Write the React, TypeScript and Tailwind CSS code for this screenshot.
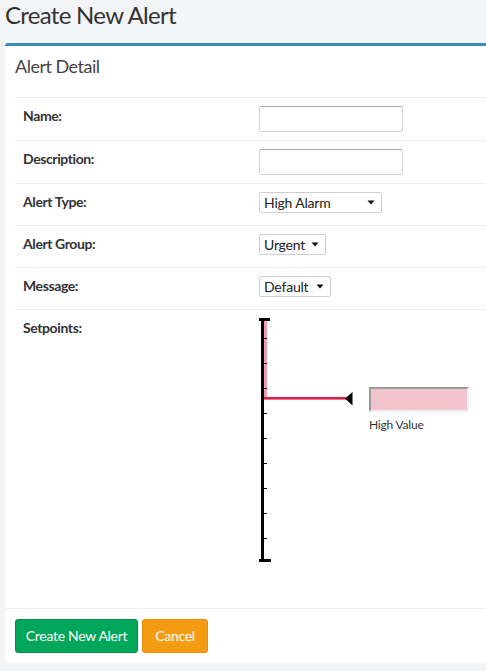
import React from "react";

function Caret() {
  return (
    <svg width="8" height="5" viewBox="0 0 8 5" className="shrink-0">
      <path d="M0.5 0.5 L7.5 0.5 L4 4.5 Z" fill="#111" />
    </svg>
  );
}

function FakeSelect({ value, width }: { value: string; width: string }) {
  return (
    <div
      className={`${width} h-[21px] border border-[#cfcfcf] rounded-[2px] bg-white flex items-center justify-between pl-[4px] pr-[6px] text-[14px] leading-[19px] tracking-[-0.2px] text-[#222]`}
    >
      <span>{value}</span>
      <Caret />
    </div>
  );
}

function TextBox() {
  return (
    <input
      type="text"
      className="block w-[144px] h-[26px] border border-[#d3d3d3] border-t-[#a9a9a9] rounded-[2px] bg-white outline-none"
    />
  );
}

function Row({
  label,
  children,
  h,
}: {
  label: string;
  children: React.ReactNode;
  h: string;
}) {
  return (
    <div className={`flex border-t border-[#f0f0f0] ${h}`}>
      <div className="w-[236px] shrink-0 px-[8px] pt-[8px] text-[14px] leading-[20px] tracking-[-0.4px] font-bold text-[#333]">
        {label}
      </div>
      <div className="px-[8px] pt-[8px]">{children}</div>
    </div>
  );
}

function Setpoints() {
  const ticks = [0, 1, 2, 3, 4, 5, 6, 7, 8].map((k) => 20 + 25 * k);
  return (
    <div className="relative w-[220px] h-[250px]">
      <svg
        width="100"
        height="250"
        viewBox="0 0 100 250"
        className="absolute left-0 top-0"
      >
        <rect x="5" y="2" width="3" height="77" fill="#ef9db0" />
        <rect x="2" y="0" width="3" height="243" fill="#000" />
        <rect x="0" y="0" width="11" height="3" fill="#000" />
        <rect x="0" y="241" width="12" height="3" fill="#000" />
        {ticks.map((t) => (
          <rect key={t} x="5" y={t} width="3" height="1" fill="#000" />
        ))}
        <rect x="5" y="79" width="82" height="2.6" fill="#d61f4a" />
        <path d="M86 80.5 L93.5 74 L93.5 87.5 Z" fill="#000" />
      </svg>
      <div className="absolute left-[110px] top-[69px]">
        <input
          type="text"
          className="block w-[100px] h-[25px] bg-[#f2c4ce] border-[2px] border-t-[#9a9a9a] border-l-[#9a9a9a] border-r-[#f2f2f2] border-b-[#f2f2f2] outline-none"
        />
        <div className="mt-[5px] text-[12px] leading-[16px] tracking-[-0.2px] text-[#333]">
          High Value
        </div>
      </div>
    </div>
  );
}

export default function App() {
  return (
    <div className="w-[486px] h-[671px] overflow-hidden bg-[#f3f4f6] font-['Lato','Open_Sans',sans-serif] text-[#333]">
      <h1 className="h-[43px] pl-[5px] pt-[1px] text-[24px] leading-[28px] tracking-[-0.7px] font-normal text-[#333]">
        Create New Alert
      </h1>
      <div className="ml-[5px] w-[520px] bg-white border-t-[3px] border-[#3c8dbc] rounded-[3px]">
        <div className="h-[41px] px-[10px] pt-[10px] text-[18px] leading-[20px] tracking-[-0.5px] text-[#444]">
          Alert Detail
        </div>
        <div className="px-[10px] pt-[10px] pb-[10px]">
          <Row label="Name:" h="h-[43px]">
            <TextBox />
          </Row>
          <Row label="Description:" h="h-[43px]">
            <TextBox />
          </Row>
          <Row label="Alert Type:" h="h-[42px]">
            <FakeSelect value="High Alarm" width="w-[123px]" />
          </Row>
          <Row label="Alert Group:" h="h-[42px]">
            <FakeSelect value="Urgent" width="w-[67px]" />
          </Row>
          <Row label="Message:" h="h-[42px]">
            <FakeSelect value="Default" width="w-[72px]" />
          </Row>
          <div className="flex border-t border-[#f0f0f0] h-[289px]">
            <div className="w-[236px] shrink-0 px-[8px] pt-[8px] text-[14px] leading-[20px] tracking-[-0.4px] font-bold text-[#333]">
              Setpoints:
            </div>
            <div className="px-[8px] pt-[8px]">
              <Setpoints />
            </div>
          </div>
        </div>
        <div className="border-t border-[#f0f0f0] p-[10px] flex gap-[4px]">
          <button className="w-[123px] h-[34px] rounded-[3px] bg-[#00a65a] border border-[#008d4c] text-white text-[14px] leading-[20px] tracking-[-0.3px]">
            Create New Alert
          </button>
          <button className="w-[66px] h-[34px] rounded-[3px] bg-[#f39c12] border border-[#e08e0b] text-white text-[14px] leading-[20px] tracking-[-0.3px]">
            Cancel
          </button>
        </div>
      </div>
    </div>
  );
}
